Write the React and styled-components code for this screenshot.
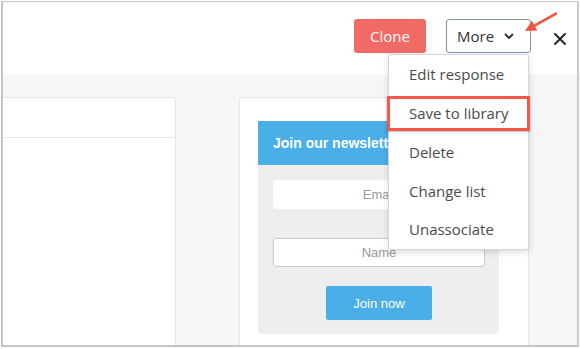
import React from "react";
import styled, { createGlobalStyle } from "styled-components";

const Global = createGlobalStyle`
  html, body { margin: 0; padding: 0; background: #ffffff; }
  body { font-family: "Open Sans", "Liberation Sans", sans-serif; }
  * { box-sizing: border-box; }
`;

const Frame = styled.div`
  position: relative;
  margin: 1px 0 0 1px;
  width: 577px;
  height: 346px;
  border-style: solid;
  border-color: #c4c4c4;
  border-width: 1px 1px 2px 2px;
  box-shadow: 1px 1px 1px rgba(0, 0, 0, 0.18);
  display: flex;
  flex-direction: column;
  overflow: hidden;
  background: #fff;
`;

const Header = styled.header`
  height: 73px;
  flex: none;
  display: flex;
  justify-content: flex-end;
  align-items: flex-start;
  padding: 16px 11px 0 0;
  background: #fff;
`;

const CloneButton = styled.button`
  height: 34px;
  width: 72px;
  margin-top: 1px;
  border: none;
  border-radius: 3px;
  background: #f06b65;
  color: #fff;
  font-family: "Open Sans", sans-serif;
  font-size: 15px;
  padding: 0;
  display: flex;
  align-items: center;
  justify-content: center;
`;

const MoreWrap = styled.div`
  position: relative;
  margin-left: 20px;
`;

const MoreButton = styled.button`
  height: 34px;
  width: 85px;
  margin-top: 1px;
  border: 1px solid #8194ae;
  border-radius: 3px;
  background: #fff;
  color: #333;
  font-family: "Open Sans", sans-serif;
  font-size: 15px;
  padding: 0 0 0 10px;
  display: flex;
  align-items: center;
  gap: 10px;
`;

const Menu = styled.ul`
  position: absolute;
  top: 36px;
  right: 2px;
  width: 141px;
  margin: 0;
  padding: 0;
  list-style: none;
  background: #fff;
  border: 1px solid #d3d6da;
  border-radius: 3px;
  box-shadow: 0 2px 6px rgba(0, 0, 0, 0.15);
  z-index: 5;
`;

const MenuItem = styled.li`
  height: 38.75px;
  display: flex;
  align-items: center;
  padding-left: 20px;
  font-family: "Open Sans", sans-serif;
  font-size: 15px;
  color: #4b4b4b;
  white-space: nowrap;
`;

const Highlight = styled.div`
  position: absolute;
  left: -2px;
  top: 41px;
  width: 143px;
  height: 35px;
  border: 3px solid #f2594a;
  box-shadow: 0 1px 2px rgba(0, 0, 0, 0.25), inset 0 0 1px rgba(0, 0, 0, 0.15);
  pointer-events: none;
`;

const CloseButton = styled.button`
  margin: 15px 0 0 23px;
  width: 12px;
  height: 12px;
  padding: 0;
  border: none;
  background: none;
  display: flex;
`;

const ArrowMark = styled.svg`
  position: absolute;
  left: 513px;
  top: 4px;
  z-index: 6;
`;

const Body = styled.main`
  flex: 1;
  display: flex;
  align-items: flex-start;
  background: #f5f6f8;
  padding-top: 22px;
  min-height: 0;
`;

const LeftCard = styled.section`
  width: 173px;
  height: 260px;
  flex: none;
  background: #fff;
  border: 1px solid #e3e6ea;
  border-left: none;
  border-bottom: none;
  border-radius: 0 4px 0 0;
`;

const LeftCardHead = styled.div`
  height: 40px;
  border-bottom: 1px solid #e6e8eb;
`;

const RightCard = styled.section`
  margin-left: 63px;
  width: 290px;
  height: 260px;
  flex: none;
  background: #fff;
  border: 1px solid #e3e6ea;
  border-bottom: none;
  border-radius: 4px 4px 0 0;
  padding: 23px 0 0 18px;
`;

const Newsletter = styled.div`
  width: 241px;
  font-family: "Liberation Sans", Arial, sans-serif;
`;

const NewsHead = styled.div`
  height: 44px;
  background: #4aaee8;
  color: #fff;
  font-weight: bold;
  font-size: 14px;
  display: flex;
  align-items: center;
  padding-left: 15px;
`;

const NewsBody = styled.div`
  background: #eeeeee;
  border-radius: 0 0 4px 4px;
  padding: 15px 14px 14px 15px;
  display: flex;
  flex-direction: column;
  align-items: center;
`;

const Field = styled.div`
  width: 100%;
  height: 29px;
  background: #fff;
  border-radius: ${(p) => (p.$bordered ? "3px" : "4px")};
  border: ${(p) => (p.$bordered ? "1px solid #c9c9c9" : "none")};
  margin-top: ${(p) => p.$mt || 0}px;
  color: #9a9a9a;
  font-size: 13px;
  display: flex;
  align-items: center;
  justify-content: center;
`;

const JoinButton = styled.button`
  margin-top: 19px;
  width: 106px;
  height: 34px;
  border: none;
  border-radius: 2px;
  background: #4aaee8;
  color: #fff;
  font-family: "Liberation Sans", Arial, sans-serif;
  font-size: 13px;
  padding: 0;
`;

const menuItems = ["Edit response", "Save to library", "Delete", "Change list", "Unassociate"];

export default function App() {
  return (
    <>
      <Global />
      <Frame>
        <Header>
          <CloneButton>Clone</CloneButton>
          <MoreWrap>
            <MoreButton>
              More
              <svg width="10" height="7" viewBox="0 0 10 7">
                <path d="M1.5 1.5 L5 5 L8.5 1.5" fill="none" stroke="#333" strokeWidth="1.9" strokeLinecap="round" strokeLinejoin="round" />
              </svg>
            </MoreButton>
            <Menu>
              {menuItems.map((m) => (
                <MenuItem key={m}>{m}</MenuItem>
              ))}
              <Highlight />
            </Menu>
          </MoreWrap>
          <CloseButton aria-label="Close">
            <svg width="12" height="12" viewBox="0 0 12 12">
              <path d="M1 1 L11 11 M11 1 L1 11" stroke="#1f1f1f" strokeWidth="1.8" strokeLinecap="round" />
            </svg>
          </CloseButton>
        </Header>
        <ArrowMark width="45" height="30" viewBox="0 0 45 30">
          <line x1="40" y1="7.7" x2="18.6" y2="19.6" stroke="#f0553f" strokeWidth="2.6" strokeLinecap="round" />
          <polygon points="9,25 21.3,24.4 15.9,14.8" fill="#f0553f" />
        </ArrowMark>
        <Body>
          <LeftCard>
            <LeftCardHead />
          </LeftCard>
          <RightCard>
            <Newsletter>
              <NewsHead>Join our newsletter</NewsHead>
              <NewsBody>
                <Field>Email</Field>
                <Field $bordered $mt={29}>Name</Field>
                <JoinButton>Join now</JoinButton>
              </NewsBody>
            </Newsletter>
          </RightCard>
        </Body>
      </Frame>
    </>
  );
}
